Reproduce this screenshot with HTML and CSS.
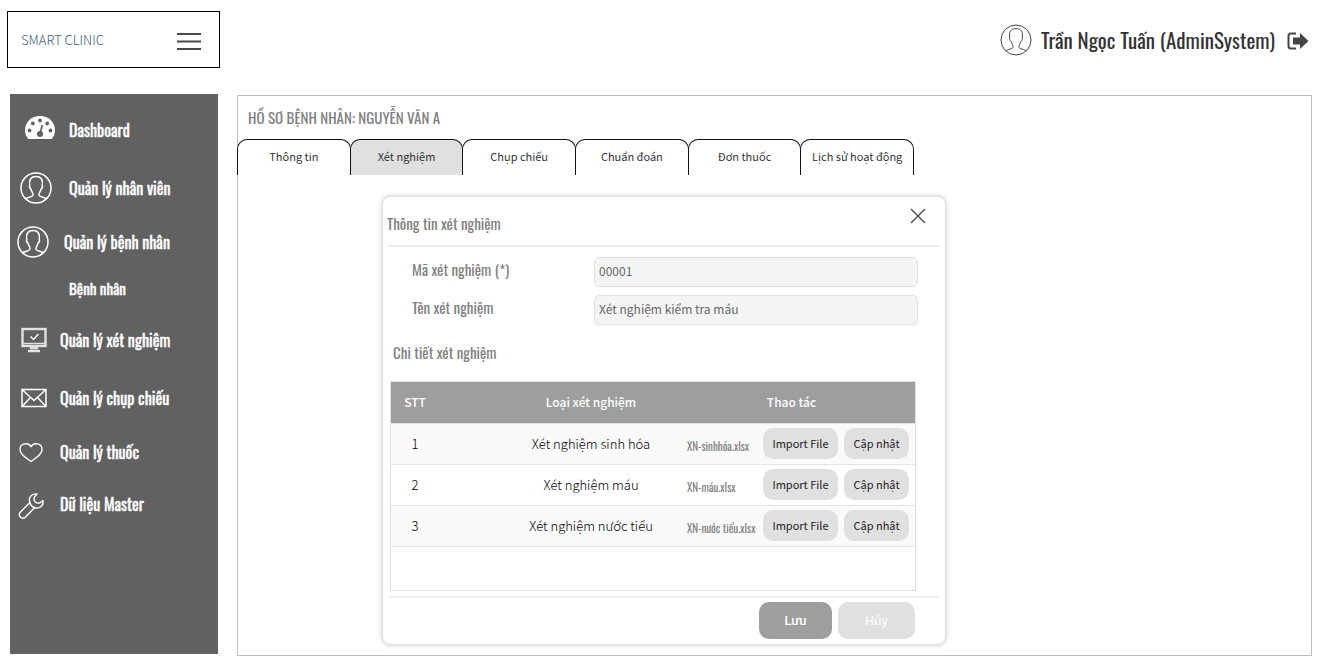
FILE: index.html
```html
<!DOCTYPE html>
<html lang="vi">
<head>
<meta charset="utf-8">
<meta name="viewport" content="width=device-width, initial-scale=1">
<title>Smart Clinic</title>
<link rel="stylesheet" href="styles.css">
</head>
<body>
<svg class="sprite" aria-hidden="true">
  <symbol id="user" viewBox="0 0 32 32">
    <g fill="none" stroke="currentColor" stroke-linejoin="round">
      <circle cx="16" cy="16" r="15"/>
      <path d="M5.500 26.800C8 25 12.600 25.200 13 23.200C13.300 21 11.600 20 11.200 17.600C9.800 16.600 9.200 14.800 9.700 13C8.900 7.500 11 4.600 16 4.600C21 4.600 23.100 7.500 22.300 13C22.800 14.800 22.200 16.600 20.800 17.600C20.400 20 18.700 21 19 23.200C19.400 25.200 24 25 26.500 26.800"/>
    </g>
  </symbol>
</svg>
<header class="topbar">
  <div class="brand">
    <a class="brand-name" href="#">SMART CLINIC</a>
    <button class="icon-button" type="button" aria-label="Menu">
      <svg width="26" height="20" viewBox="0 0 26 20" fill="none" stroke="#4a4a4a" stroke-width="2.2"><path d="M1 4H25M1 11.500H25M1 19H25"/></svg>
    </button>
  </div>
  <div class="account">
    <svg class="avatar" width="32" height="32"><use href="#user"/></svg>
    <span class="account-name">Trần Ngọc Tuấn (AdminSystem)</span>
    <button class="icon-button" type="button" aria-label="Đăng xuất">
      <svg width="22" height="20" viewBox="0 -2 22 20"><path d="M9 1.500H4Q1.500 1.500 1.500 4V14Q1.500 16.500 4 16.500H9" fill="none" stroke="#444" stroke-width="2"/><path d="M6 5.500H13V1L21.500 9L13 17V12.500H6Z" fill="#444"/></svg>
    </button>
  </div>
</header>
<div class="layout">
  <nav class="sidebar">
    <a class="nav-item tall wide" href="#">
      <svg class="nav-icon inset" width="32" height="26" viewBox="0 0 32 26"><path d="M4.500 24Q1 20.500 1 15.500C1 7 7.500 1 16 1S31 7 31 15.500Q31 20.500 27.500 24Z" fill="#fff"/><g fill="#616161"><circle cx="5.500" cy="15.500" r="1.900"/><circle cx="8.800" cy="8.500" r="1.900"/><circle cx="16" cy="5.500" r="1.900"/><circle cx="23.200" cy="8.500" r="1.900"/><circle cx="26.500" cy="15.500" r="1.900"/><circle cx="16" cy="19" r="3"/></g><path d="M16 19L18.300 10" stroke="#616161" stroke-width="1.700"/></svg>
      Dashboard</a>
    <a class="nav-item wide" href="#">
      <svg class="nav-icon bold" width="32" height="32"><use href="#user"/></svg>
      Quản lý nhân viên</a>
    <a class="nav-item short medium" href="#">
      <svg class="nav-icon bold" width="32" height="32"><use href="#user"/></svg>
      Quản lý bệnh nhân</a>
    <a class="nav-item sub" href="#">Bệnh nhân</a>
    <a class="nav-item" href="#">
      <svg class="nav-icon" width="30" height="26" viewBox="-2 0 30 26" fill="none" stroke="#e2e2e2"><rect x="2.500" y="2" width="23" height="17" stroke-width="2.400"/><path d="M2 16.500H26" stroke-width="1.500"/><path d="M10.500 9.500L13.500 12.500L18.500 7" stroke-width="1.400" stroke="#fff"/><path d="M10 21H18M8 24H20" stroke-width="2.500"/></svg>
      Quản lý xét nghiệm</a>
    <a class="nav-item tall" href="#">
      <svg class="nav-icon" width="30" height="26" viewBox="-2 0 30 26" fill="none" stroke="#fff" stroke-width="1.500"><path d="M2 4.500H26V21.500H2ZM2 4.500L14 15.500L26 4.500M2 21.500L10.500 12.500M26 21.500L17.500 12.500"/></svg>
      Quản lý chụp chiếu</a>
    <a class="nav-item compact" href="#">
      <svg class="nav-icon" width="25" height="22" viewBox="-1 -1 25 22" fill="none" stroke="#fff" stroke-width="1.400"><path d="M12 19.500C8 16.500 1 13 1 7.500C1 1 9 0 12 4.500C15 0 23 1 23 7.500C23 13 16 16.500 12 19.500Z"/></svg>
      Quản lý thuốc</a>
    <a class="nav-item" href="#">
      <svg class="nav-icon" width="26" height="32" viewBox="0 -4 26 32" fill="none" stroke="#fff" stroke-width="1.400" stroke-linejoin="round"><path d="M19 2C13.500 1 10 6 12 10.500L2.200 20.200C-.500 23.500 3.700 28 7.200 25.200L16.800 15.500C21 17.500 26 14 25 8.500L22.500 10.500C18.500 12.500 14.500 9 16.800 4.500ZM12 10.500C12.500 13 14 15 16.800 15.500"/></svg>
      Dữ liệu Master</a>
  </nav>
  <main class="panel">
    <h1 class="panel-title">HỒ SƠ BỆNH NHÂN: NGUYỄN VĂN A</h1>
    <div class="tabs" role="tablist">
      <button class="tab" type="button" role="tab">Thông tin</button>
      <button class="tab active" type="button" role="tab" aria-selected="true">Xét nghiệm</button>
      <button class="tab" type="button" role="tab">Chụp chiếu</button>
      <button class="tab" type="button" role="tab">Chuẩn đoán</button>
      <button class="tab" type="button" role="tab">Đơn thuốc</button>
      <button class="tab" type="button" role="tab">Lịch sử hoạt động</button>
    </div>
    <section class="dialog" role="dialog" aria-labelledby="dialog-title">
      <div class="dialog-head">
        <h2 class="heading" id="dialog-title">Thông tin xét nghiệm</h2>
        <button class="icon-button" type="button" aria-label="Đóng">
          <svg width="16" height="16" viewBox="0 0 16 16" stroke="#444" stroke-width="1.300"><path d="M1 1L15 15M15 1L1 15"/></svg>
        </button>
      </div>
      <form class="form">
        <div class="field">
          <label class="heading" for="code">Mã xét nghiệm (*)</label>
          <input class="input" id="code" type="text" value="00001">
        </div>
        <div class="field">
          <label class="heading" for="name">Tên xét nghiệm</label>
          <input class="input" id="name" type="text" value="Xét nghiệm kiểm tra máu">
        </div>
      </form>
      <h3 class="heading detail-title">Chi tiết xét nghiệm</h3>
      <div class="table-box">
        <table class="table">
          <thead>
            <tr><th class="col-no">STT</th><th class="col-type">Loại xét nghiệm</th><th class="col-action" colspan="2">Thao tác</th></tr>
          </thead>
          <tbody>
            <tr><td>1</td><td class="col-type">Xét nghiệm sinh hóa</td><td class="col-file">XN-sinhhóa.xlsx</td><td class="col-buttons"><div class="row-buttons"><button class="pill import" type="button">Import File</button><button class="pill" type="button">Cập nhật</button></div></td></tr>
            <tr><td>2</td><td class="col-type">Xét nghiệm máu</td><td class="col-file">XN-máu.xlsx</td><td class="col-buttons"><div class="row-buttons"><button class="pill import" type="button">Import File</button><button class="pill" type="button">Cập nhật</button></div></td></tr>
            <tr><td>3</td><td class="col-type">Xét nghiệm nước tiểu</td><td class="col-file">XN-nước tiểu.xlsx</td><td class="col-buttons"><div class="row-buttons"><button class="pill import" type="button">Import File</button><button class="pill" type="button">Cập nhật</button></div></td></tr>
          </tbody>
        </table>
      </div>
      <div class="dialog-foot">
        <button class="action save" type="button">Lưu</button>
        <button class="action cancel" type="button">Hủy</button>
      </div>
    </section>
  </main>
</div>
</body>
</html>
```
FILE: styles.css
```css
:root {
  --narrow: Oswald, "Liberation Sans Narrow", "Noto Sans", sans-serif;
  --text: "Noto Sans CJK SC", "Noto Sans", sans-serif;
}
* { box-sizing: border-box; }
body {
  margin: 0;
  min-height: 100vh;
  display: flex;
  flex-direction: column;
  background: #fff;
  color: #333;
  font-family: var(--text);
  font-size: 12px;
}
h1, h2, h3 { margin: 0; }
button, input { font-family: inherit; }
.sprite { display: none; }
.icon-button { display: flex; padding: 0; border: 0; background: none; }

.topbar { display: flex; justify-content: space-between; padding: 11px 14px 0 7px; }
.brand {
  width: 213px;
  height: 57px;
  padding: 0 17px 0 13px;
  display: flex;
  align-items: center;
  justify-content: space-between;
  border: 1px solid #000;
}
.brand-name { color: #3d6073; font-size: 13px; font-weight: 300; text-decoration: none; }
.account { display: flex; align-items: center; height: 58px; }
.avatar { color: #444; }
.account-name { margin: 0 12px 0 9px; font-family: var(--narrow); font-size: 21px; line-height: 30px; }

.layout { flex: 1; display: flex; gap: 19px; padding: 25px 11px 15px 10px; }
.sidebar { width: 208px; flex-shrink: 0; margin-bottom: 2px; padding-top: 6px; background: #616161; }
.nav-item {
  display: grid;
  grid-template-columns: 42px 1fr;
  align-items: center;
  height: 56px;
  padding-left: 8px;
  color: #fff;
  font-family: var(--narrow);
  font-size: 16px;
  -webkit-text-stroke: 0.4px #fff;
  text-decoration: none;
}
.nav-item.wide { grid-template-columns: 49px 1fr; padding-left: 10px; }
.nav-item.medium { grid-template-columns: 47px 1fr; padding-left: 7px; }
.nav-item.tall { height: 60px; }
.nav-item.short { height: 52px; }
.nav-item.compact { height: 48px; }
.nav-item.sub { display: flex; height: 44px; padding: 0 0 4px 59px; font-size: 15px; }
.nav-icon { justify-self: start; }
.nav-icon.inset { margin: 0 0 4px 4px; }
.bold { stroke-width: 1.5px; }

.panel { flex: 1; min-width: 0; margin-top: 1px; border: 1px solid #bdbdbd; }
.panel-title { padding: 9px 10px 0; color: #808080; font-family: var(--narrow); font-size: 15px; font-weight: 400; line-height: 24px; }
.tabs { display: flex; width: 677px; max-width: 100%; margin: 10px 0 0 -1px; }
.tab {
  flex: 1;
  height: 36px;
  padding: 0 0 4px;
  border: 1px solid #111;
  border-bottom: 0;
  border-radius: 10px 10px 0 0;
  background: #fff;
  color: #333;
  font-size: 11px;
}
.tab + .tab { margin-left: -1px; }
.tab.active { background: #e0e0e0; }

.dialog {
  max-width: 564px;
  margin: 21px 10px 10px 144px;
  padding: 0 5px 5px 4px;
  border: 1px solid #e0e0e0;
  border-radius: 8px;
  background: #fff;
  box-shadow: 0 0 5px rgba(0, 0, 0, .2);
}
.heading { color: #808080; font-family: var(--narrow); font-size: 15px; font-weight: 400; line-height: 24px; }
.dialog-head {
  display: flex;
  justify-content: space-between;
  height: 50px;
  padding: 14px 14px 0 0;
  border-bottom: 2px solid #eee;
}
.dialog-head .icon-button { height: 16px; margin-top: -3px; }
.form { display: grid; gap: 8px; padding: 10px 22px 0 25px; }
.field { display: grid; grid-template-columns: 182px 1fr; }
.input {
  width: 100%;
  height: 30px;
  padding: 0 4px 3px;
  border: 1px solid #e0e0e0;
  border-radius: 5px;
  background: #f4f4f4;
  color: #666;
  font-size: 12px;
}
.detail-title { padding: 15px 6px 17px; }
.table-box { min-height: 210px; margin: 0 24px 5px 3px; border: 1px solid #e0e0e0; }
.table { width: 100%; table-layout: fixed; border-collapse: collapse; text-align: center; color: #000; font-size: 13px; font-weight: 300; }
.table th { height: 41px; padding: 0 0 2px; background: #9e9e9e; color: #fff; font-size: 12px; font-weight: 500; }
.table td { height: 41px; padding: 0; border-top: 1px solid #e4e4e4; }
.table tbody tr:last-child td { border-bottom: 1px solid #e4e4e4; }
.table tbody tr:nth-child(odd) { background: #fafafa; }
.table .col-no { width: 48px; }
.table .col-type { padding-left: 57px; }
.table .col-action { width: 229px; padding-right: 18px; }
.table .col-file { padding: 4px 0 0 1px; color: #808080; font-family: var(--narrow); font-size: 11px; font-weight: 400; text-align: left; white-space: nowrap; }
.row-buttons { display: flex; justify-content: flex-end; gap: 6px; padding-right: 6px; }
.pill { width: 65px; height: 31px; padding: 0 0 1px; border: 0; border-radius: 10px; background: #e0e0e0; color: #222; font-size: 11px; flex-shrink: 0; }
.pill.import { width: 75px; }
.dialog-foot { display: flex; justify-content: flex-end; gap: 6px; margin: 0 2px 0 3px; padding: 4px 23px 0 0; border-top: 2px solid #eee; }
.action { width: 77px; height: 37px; border: 0; border-radius: 10px; font-family: Roboto, sans-serif; font-size: 13px; font-weight: 500; color: #fff; }
.save { width: 73px; background: #9e9e9e; }
.cancel { background: #e0e0e0; color: #f8f8f8; }
```
